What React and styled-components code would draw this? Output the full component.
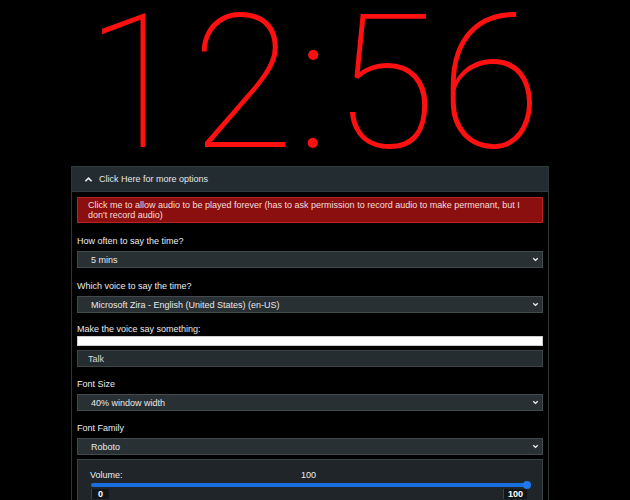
import React from "react";
import styled, { createGlobalStyle } from "styled-components";

const Global = createGlobalStyle`
  html, body {
    margin: 0;
    padding: 0;
    background: #000;
    overflow: hidden;
  }
  body {
    font-family: "Liberation Sans", Arial, sans-serif;
    color: #e2e2e2;
  }
`;

const Page = styled.div`
  width: 630px;
  height: 500px;
  overflow: hidden;
`;

const Clock = styled.div`
  font-family: Roboto, "Noto Sans", sans-serif;
  font-weight: 100;
  font-size: 188px;
  line-height: 166px;
  height: 166px;
  color: #ff1010;
  text-align: center;
  letter-spacing: 3px;
`;

const Panel = styled.div`
  width: 478px;
  margin-left: 71px;
  box-sizing: border-box;
  border-left: 1px solid #2c3538;
  border-right: 1px solid #2c3538;
`;

const Header = styled.div`
  height: 26px;
  box-sizing: border-box;
  display: flex;
  align-items: center;
  gap: 6px;
  padding-left: 12px;
  background: #232d31;
  border-top: 1px solid #323b3e;
  border-bottom: 1px solid #323b3e;
  font-size: 9px;
  color: #e6e6e6;
`;

const Body = styled.div`
  padding: 5px 5px 0;
`;

const Alert = styled.div`
  background: #8c0f0f;
  border: 1px solid #b42424;
  color: #f3dede;
  font-size: 9px;
  line-height: 10px;
  padding: 2px 10px;
  box-sizing: border-box;
  height: 26px;
`;

const Label = styled.div`
  font-size: 9px;
  line-height: 10px;
  height: 10px;
  margin-top: ${(p) => p.$top ?? 13}px;
  margin-bottom: ${(p) => p.$bottom ?? 5}px;
  color: #ececec;
`;

const SelectBox = styled.div`
  height: 17px;
  box-sizing: border-box;
  display: flex;
  align-items: center;
  justify-content: space-between;
  padding: 0 2px 0 13px;
  background: #293033;
  border: 1px solid #424a4d;
  font-size: 9px;
  color: #e8e8e8;
`;

const TextInput = styled.div`
  height: 10px;
  box-sizing: border-box;
  background: #fff;
  border: 1px solid #ccc;
`;

const Button = styled.div`
  margin-top: 4px;
  height: 17px;
  box-sizing: border-box;
  display: flex;
  align-items: center;
  padding-left: 10px;
  background: #262d30;
  border: 1px solid #3d4548;
  font-size: 9px;
  color: #d8d8d8;
`;

const VolumeBox = styled.div`
  margin-top: 4px;
  height: 60px;
  box-sizing: border-box;
  background: #1f2528;
  border: 1px solid #3a4346;
  padding: 10px 15px 0 12px;
  font-size: 9px;
  color: #eee;
`;

const VolumeTop = styled.div`
  display: grid;
  grid-template-columns: 1fr auto 1fr;
  line-height: 10px;
`;

const Track = styled.div`
  position: relative;
  margin: 3px 0 0 1px;
  height: 4px;
  border-radius: 2px;
  background: #1a6fe0;
`;

const Thumb = styled.div`
  position: absolute;
  right: -4px;
  top: -2px;
  width: 8px;
  height: 8px;
  border-radius: 50%;
  background: #1f78ee;
`;

const Ticks = styled.div`
  display: flex;
  justify-content: space-between;
  margin-top: 2px;
  padding-left: 1px;
  font-weight: bold;
  font-size: 9px;
  line-height: 10px;
  color: #fff;
`;

const Tick = styled.span`
  background: #121618;
  padding: 0 ${(p) => p.$pad ?? 8}px;
  border-left: 1px solid #3a4346;
`;

const Chevron = ({ up }) => (
  <svg width="9" height="9" viewBox="0 0 10 10">
    <path
      d={up ? "M1.5 7 L5 3.5 L8.5 7" : "M2.5 3.5 L5 6 L7.5 3.5"}
      fill="none"
      stroke="#f0f0f0"
      strokeWidth={up ? 1.8 : 1.5}
    />
  </svg>
);

const Select = ({ value }) => (
  <SelectBox>
    <span>{value}</span>
    <Chevron />
  </SelectBox>
);

export default function App() {
  return (
    <Page>
      <Global />
      <Clock>12:56</Clock>
      <Panel>
        <Header>
          <Chevron up />
          <span>Click Here for more options</span>
        </Header>
        <Body>
          <Alert>
            Click me to allow audio to be played forever (has to ask permission to record audio to make permenant, but I don't record audio)
          </Alert>

          <Label>How often to say the time?</Label>
          <Select value="5 mins" />

          <Label>Which voice to say the time?</Label>
          <Select value="Microsoft Zira - English (United States) (en-US)" />

          <Label $top={11} $bottom={2}>Make the voice say something:</Label>
          <TextInput />
          <Button>Talk</Button>

          <Label $top={12}>Font Size</Label>
          <Select value="40% window width" />

          <Label $top={12}>Font Family</Label>
          <Select value="Roboto" />

          <VolumeBox>
            <VolumeTop>
              <span>Volume:</span>
              <span>100</span>
              <span />
            </VolumeTop>
            <Track>
              <Thumb />
            </Track>
            <Ticks>
              <Tick $pad={6}>0</Tick>
              <Tick $pad={4}>100</Tick>
            </Ticks>
          </VolumeBox>
        </Body>
      </Panel>
    </Page>
  );
}
